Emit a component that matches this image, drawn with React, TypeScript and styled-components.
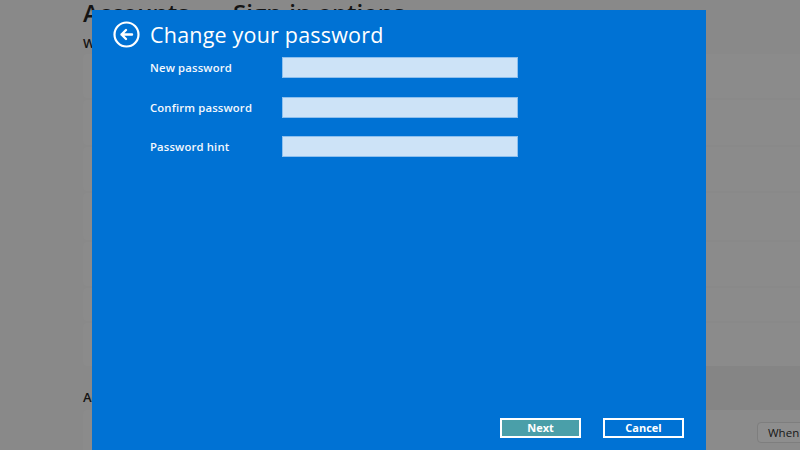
import React from 'react'
import styled, { createGlobalStyle } from 'styled-components'

const GlobalStyle = createGlobalStyle`
  html, body {
    margin: 0;
    padding: 0;
    width: 800px;
    height: 450px;
    overflow: hidden;
    background: #898989;
  }
  * { box-sizing: border-box; }
`

const Screen = styled.div`
  position: relative;
  width: 800px;
  height: 450px;
  overflow: hidden;
  background: #898989;
  font-family: 'Open Sans', 'Noto Sans', sans-serif;
`

// dimmed settings page behind the dialog
const SettingsPage = styled.div`
  display: flex;
  flex-direction: column;
  padding-left: 83px;
  color: #141414;
`
const PageTitle = styled.h1`
  margin: -2px 0 0;
  height: 30px;
  font-size: 24px;
  font-weight: 600;
  line-height: 30px;
  white-space: nowrap;
`
const Crumb = styled.span`
  margin: 0 18px;
`
const SectionTitle = styled.h2`
  margin: 0;
  padding-top: 4px;
  height: 26px;
  font-size: 13px;
  font-weight: 600;
  line-height: 22px;
`
const CardList = styled.div`
  display: flex;
  flex-direction: column;
  gap: 2px;
`
const Card = styled.div<{ h: number }>`
  height: ${({ h }) => h}px;
  background: #8b8b8b;
  border-radius: 4px 0 0 4px;
`
const SubHeading = styled.div`
  display: flex;
  align-items: flex-end;
  height: 44px;
  margin-left: -83px;
  padding-left: 83px;
  padding-bottom: 4px;
  background: linear-gradient(to right, #898989 92px, #858585 92px);
  font-size: 13px;
  font-weight: 600;
`
const LastCard = styled.div`
  display: flex;
  justify-content: flex-end;
  align-items: flex-start;
  height: 60px;
  padding-top: 12px;
  background: #8b8b8b;
  border-radius: 4px 0 0 4px;
`
const Dropdown = styled.div`
  flex: none;
  width: 110px;
  height: 21px;
  margin-right: -67px;
  padding-left: 10px;
  border: 1px solid #7e7e7e;
  border-radius: 4px;
  background: #8e8e8e;
  font-size: 11.5px;
  line-height: 19px;
  color: #161616;
  white-space: nowrap;
`

// the modal
const Dialog = styled.div`
  position: absolute;
  left: 92px;
  top: 10px;
  width: 614px;
  height: 442px;
  background: #0072d4;
  display: flex;
  flex-direction: column;
  padding: 11px 22px 14px 21px;
  color: #fff;
`
const Header = styled.div`
  display: flex;
  align-items: center;
  gap: 10px;
  height: 27px;
`
const Title = styled.h1`
  margin: 0;
  font-size: 21.5px;
  font-weight: 400;
  letter-spacing: 0.2px;
  color: #fff;
`
const Form = styled.div`
  display: flex;
  flex-direction: column;
  gap: 18.5px;
  margin-top: 9px;
  padding-left: 37px;
`
const Row = styled.div`
  display: flex;
  align-items: center;
  height: 21px;
`
const Label = styled.label`
  width: 132px;
  font-size: 11.3px;
  font-weight: 600;
  letter-spacing: 0.15px;
  color: #f4f8fd;
`
const Input = styled.input`
  width: 236px;
  height: 21px;
  padding: 0 4px;
  border: 1px solid #8ec0ee;
  background: #cde3f7;
  outline: none;
`
const Footer = styled.div`
  margin-top: auto;
  display: flex;
  justify-content: flex-end;
  gap: 22px;
`
const Button = styled.button<{ primary?: boolean }>`
  width: 81px;
  height: 20px;
  padding: 0;
  border: 2px solid #fff;
  background: ${({ primary }) => (primary ? '#4a9fa9' : '#0072d4')};
  color: #fff;
  font-family: 'Open Sans', sans-serif;
  font-size: 11px;
  font-weight: 700;
  line-height: 16px;
`

const BackIcon = () => (
  <svg width="27" height="27" viewBox="0 0 27 27" fill="none">
    <circle cx="13.5" cy="13.5" r="12" stroke="#fff" strokeWidth="2.2" />
    <path d="M19 13.5H8.5M13 9l-4.5 4.5L13 18" stroke="#fff" strokeWidth="2.4" strokeLinecap="round" strokeLinejoin="round" />
  </svg>
)

export default function App() {
  return (
    <Screen>
      <GlobalStyle />
      <SettingsPage>
        <PageTitle>
          Accounts<Crumb>›</Crumb>Sign-in options
        </PageTitle>
        <SectionTitle>Ways to sign in</SectionTitle>
        <CardList>
          <Card h={44} />
          <Card h={45} />
          <Card h={44} />
          <Card h={47} />
          <Card h={44} />
          <Card h={33} />
          <Card h={43} />
        </CardList>
        <SubHeading>Additional settings</SubHeading>
        <LastCard>
          <Dropdown>When PC wakes up</Dropdown>
        </LastCard>
      </SettingsPage>

      <Dialog>
        <Header>
          <BackIcon />
          <Title>Change your password</Title>
        </Header>
        <Form>
          <Row>
            <Label>New password</Label>
            <Input type="password" />
          </Row>
          <Row>
            <Label>Confirm password</Label>
            <Input type="password" />
          </Row>
          <Row>
            <Label>Password hint</Label>
            <Input type="text" />
          </Row>
        </Form>
        <Footer>
          <Button primary>Next</Button>
          <Button>Cancel</Button>
        </Footer>
      </Dialog>
    </Screen>
  )
}
